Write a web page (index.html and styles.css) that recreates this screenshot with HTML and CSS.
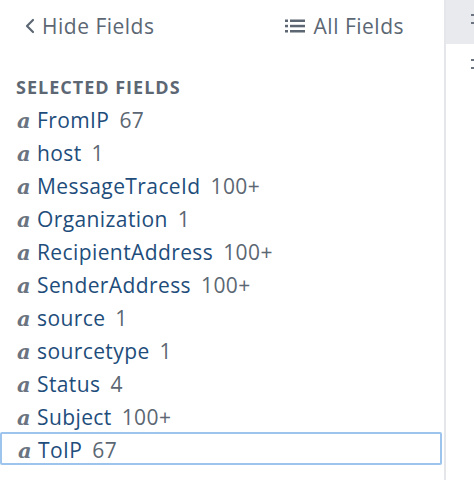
FILE: index.html
```html
<!DOCTYPE html>
<html>
<head>
<meta charset="utf-8">
<link rel="stylesheet" href="styles.css">
</head>
<body>
<div class="layout">
  <aside class="sidebar">
    <div class="toolbar">
      <a class="hide-link"><svg class="chev" width="10" height="16" viewBox="0 0 10 16"><path d="M8 2 L2 8 L8 14" fill="none" stroke="#5c6773" stroke-width="2.2" stroke-linecap="round" stroke-linejoin="round"/></svg>Hide Fields</a>
      <a class="all-link"><svg class="list" width="20" height="16" viewBox="0 0 20 16"><rect x="0" y="1.5" width="3" height="2.5" fill="#5c6773"/><rect x="5" y="1.5" width="15" height="2.5" fill="#5c6773"/><rect x="0" y="6.8" width="3" height="2.5" fill="#5c6773"/><rect x="5" y="6.8" width="15" height="2.5" fill="#5c6773"/><rect x="0" y="12" width="3" height="2.5" fill="#5c6773"/><rect x="5" y="12" width="15" height="2.5" fill="#5c6773"/></svg>All Fields</a>
    </div>
    <h3 class="section-title">SELECTED FIELDS</h3>
    <ul class="fields">
      <li class="field"><span class="type">a</span><span class="name">FromIP</span><span class="count">67</span></li>
      <li class="field"><span class="type">a</span><span class="name">host</span><span class="count">1</span></li>
      <li class="field"><span class="type">a</span><span class="name">MessageTraceId</span><span class="count">100+</span></li>
      <li class="field"><span class="type">a</span><span class="name">Organization</span><span class="count">1</span></li>
      <li class="field"><span class="type">a</span><span class="name">RecipientAddress</span><span class="count">100+</span></li>
      <li class="field"><span class="type">a</span><span class="name">SenderAddress</span><span class="count">100+</span></li>
      <li class="field"><span class="type">a</span><span class="name">source</span><span class="count">1</span></li>
      <li class="field"><span class="type">a</span><span class="name">sourcetype</span><span class="count">1</span></li>
      <li class="field"><span class="type">a</span><span class="name">Status</span><span class="count">4</span></li>
      <li class="field"><span class="type">a</span><span class="name">Subject</span><span class="count">100+</span></li>
      <li class="field focused"><span class="type">a</span><span class="name">ToIP</span><span class="count">67</span></li>
    </ul>
  </aside>
  <section class="main">
    <div class="main-head"><span class="mark"></span><span class="mark"></span></div>
    <div class="main-body"><span class="mark"></span><span class="mark"></span></div>
  </section>
</div>
</body>
</html>
```
FILE: styles.css
```css
* { box-sizing: border-box; }
html, body { margin: 0; padding: 0; background: #fff; }
body {
  font-family: "Open Sans", "Lato", sans-serif;
  color: #5c6773;
  width: 474px;
  height: 480px;
  overflow: hidden;
}
.layout {
  display: flex;
  height: 480px;
}
.sidebar {
  width: 446px;
  flex: none;
  border-right: 2px solid #e4e6ea;
}
.toolbar {
  display: flex;
  align-items: center;
  justify-content: space-between;
  height: 51px;
  padding: 1px 40px 0 25px;
  font-size: 21px;
  letter-spacing: 0.5px;
}
.hide-link, .all-link {
  display: flex;
  align-items: center;
  color: #5c6773;
}
.chev { margin-right: 7px; }
.list { margin-right: 9px; margin-left: -2px; }
.section-title {
  margin: 23px 0 0 16px;
  font-size: 18px;
  font-weight: 700;
  color: #5c6773;
  line-height: 26px;
  letter-spacing: 1px;
}
.fields {
  list-style: none;
  margin: 2px 0 0 0;
  padding: 0;
}
.field {
  display: flex;
  align-items: baseline;
  height: 33px;
  line-height: 31px;
  padding-top: 2px;
  padding-left: 16px;
  font-size: 21px;
  letter-spacing: 0.4px;
  width: 442px;
  border: 1px solid transparent;
}
.type {
  font-family: "DejaVu Serif", "Liberation Serif", serif;
  font-style: italic;
  font-weight: 700;
  color: #6b7480;
  font-size: 21px;
  letter-spacing: 0;
  width: 20px;
  flex: none;
}
.name { color: #1e4d7b; margin-right: 10px; }
.count { color: #5c6773; }
.field.focused {
  border: 2px solid #9dc4ec;
  border-radius: 2px;
  padding-top: 1px;
}
.main {
  flex: 1;
  display: flex;
  flex-direction: column;
}
.main-head {
  height: 44px;
  background: #e8eaee;
  padding: 14px 0 0 25px;
  display: flex;
  flex-direction: column;
  gap: 6px;
}
.main-body {
  padding: 15px 0 0 25px;
  display: flex;
  flex-direction: column;
  gap: 6px;
}
.mark {
  display: block;
  width: 4px;
  height: 2px;
  background: #6b7480;
}
```
